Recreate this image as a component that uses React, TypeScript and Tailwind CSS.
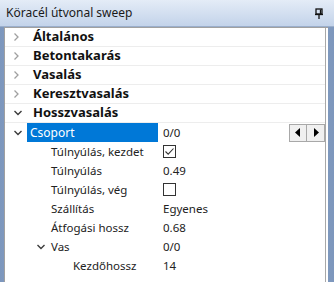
const font = { fontFamily: '"Noto Sans", "Open Sans", sans-serif' }

type Row = {
  label: string
  value?: string
  check?: boolean
  indent: number
  chevron?: 'open' | 'closed'
  bold?: boolean
  selected?: boolean
  nav?: boolean
}

const rows: Row[] = [
  { label: 'Általános', indent: 0, chevron: 'closed', bold: true },
  { label: 'Betontakarás', indent: 0, chevron: 'closed', bold: true },
  { label: 'Vasalás', indent: 0, chevron: 'closed', bold: true },
  { label: 'Keresztvasalás', indent: 0, chevron: 'closed', bold: true },
  { label: 'Hosszvasalás', indent: 0, chevron: 'open', bold: true },
  { label: 'Csoport', value: '0/0', indent: 0, chevron: 'open', selected: true, nav: true },
  { label: 'Túlnyúlás, kezdet', check: true, indent: 1 },
  { label: 'Túlnyúlás', value: '0.49', indent: 1 },
  { label: 'Túlnyúlás, vég', check: false, indent: 1 },
  { label: 'Szállítás', value: 'Egyenes', indent: 1 },
  { label: 'Átfogási hossz', value: '0.68', indent: 1 },
  { label: 'Vas', value: '0/0', indent: 1, chevron: 'open' },
  { label: 'Kezdőhossz', value: '14', indent: 2 },
]

function Chevron({ open }: { open: boolean }) {
  return open ? (
    <svg width="10" height="10" viewBox="0 0 10 10">
      <polyline points="1.5,3 5,6.5 8.5,3" fill="none" stroke="#3c3c3c" strokeWidth="1.4" />
    </svg>
  ) : (
    <svg width="10" height="10" viewBox="0 0 10 10">
      <polyline points="1.5,1.5 5,5 1.5,8.5" fill="none" stroke="#a0a0a0" strokeWidth="1.3" />
    </svg>
  )
}

function CheckBox({ checked }: { checked: boolean }) {
  return (
    <div className="w-[13px] h-[13px] border border-[#333] bg-white flex items-center justify-center">
      {checked && (
        <svg width="11" height="11" viewBox="0 0 11 11">
          <polyline points="1.5,5.5 4.2,8.2 9.5,2.5" fill="none" stroke="#333" strokeWidth="1.1" />
        </svg>
      )}
    </div>
  )
}

function NavButtons() {
  return (
    <div className="flex border border-[#a8a8a8] bg-[#f0f0f0] h-[18px]">
      <div className="w-[17px] flex items-center justify-center border-r border-[#a8a8a8]">
        <svg width="6" height="9" viewBox="0 0 6 9">
          <polygon points="5,0 5,9 0,4.5" fill="#000" />
        </svg>
      </div>
      <div className="w-[17px] flex items-center justify-center">
        <svg width="6" height="9" viewBox="0 0 6 9">
          <polygon points="1,0 1,9 6,4.5" fill="#000" />
        </svg>
      </div>
    </div>
  )
}

function PropRow({ row }: { row: Row }) {
  const labelPad = row.indent === 1 ? 'pl-[24px]' : 'pl-[46px]'
  return (
    <div className={`flex h-[19px] items-center ${row.bold ? 'border-b border-[#ededed]' : ''}`}>
      <div className="w-[22px] pl-[8px] shrink-0 flex items-center">
        {row.chevron && row.indent === 0 && <Chevron open={row.chevron === 'open'} />}
      </div>
      {row.bold ? (
        <div className="pl-[6px] text-[13px] font-bold text-[#111]">{row.label}</div>
      ) : (
        <>
          <div
            className={`w-[131px] h-full shrink-0 flex items-center text-[11.5px] ${
              row.selected ? 'bg-[#0078d7] text-white pl-[3px] text-[12px]' : `text-[#222] ${labelPad}`
            }`}
          >
            {row.chevron && row.indent > 0 && (
              <span className="-ml-[15px] mr-[5px] flex">
                <Chevron open />
              </span>
            )}
            {row.label}
          </div>
          <div className="flex-1 flex items-center justify-between pl-[5px] text-[11.5px] text-[#222]">
            {row.check !== undefined ? <CheckBox checked={row.check} /> : <span>{row.value}</span>}
            {row.nav && <NavButtons />}
          </div>
        </>
      )}
    </div>
  )
}

export default function App() {
  return (
    <div className="w-[334px] h-[282px] flex flex-col bg-[#8ea8cc] overflow-hidden" style={font}>
      <div className="h-[27px] shrink-0 flex items-center justify-between px-[6px] bg-gradient-to-b from-[#e4ecf7] to-[#c3d3ea] border-b border-[#9aaecb]">
        <span className="text-[12px] text-[#1a1a1a]">Köracél útvonal sweep</span>
        <svg width="10" height="11" viewBox="0 0 10 11" className="mr-[4px]">
          <rect x="2" y="1" width="6" height="5" fill="none" stroke="#111" strokeWidth="1.3" />
          <line x1="1" y1="6.5" x2="9" y2="6.5" stroke="#111" strokeWidth="1.3" />
          <line x1="5" y1="7" x2="5" y2="11" stroke="#111" strokeWidth="1.3" />
          <line x1="6.5" y1="1.5" x2="6.5" y2="6" stroke="#111" strokeWidth="1.3" />
        </svg>
      </div>
      <div className="flex-1 flex pl-[4px] pr-[6px] bg-gradient-to-r from-[#7d97bd] via-[#b7c8e0] to-[#7d97bd]">
        <div className="flex-1 bg-white border-l border-t border-[#a0a0a0] flex">
          <div className="flex-1 flex flex-col border-r border-[#a8a8a8]">
            {rows.map((r) => (
              <PropRow key={r.label} row={r} />
            ))}
          </div>
          <div className="w-[2px] bg-white" />
        </div>
      </div>
    </div>
  )
}
